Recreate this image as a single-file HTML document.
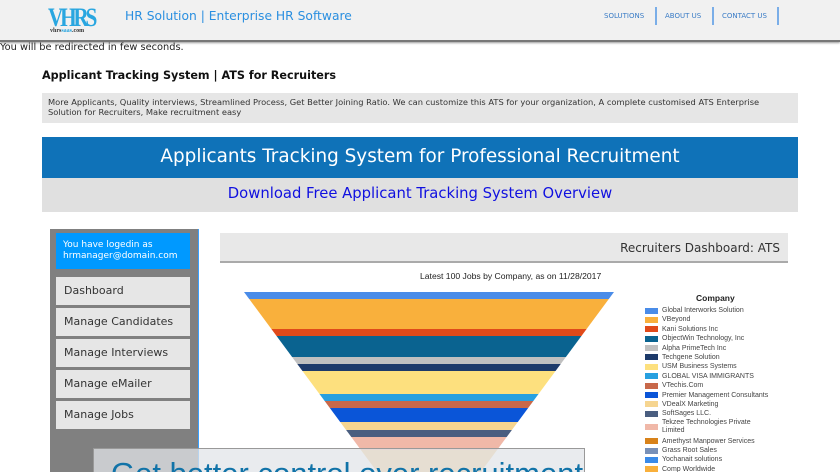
<!DOCTYPE html>
<html><head><meta charset="utf-8"><style>
*{margin:0;padding:0;box-sizing:border-box}
html,body{width:840px;height:472px;overflow:hidden}
body{background:#fff;font-family:"DejaVu Sans","Liberation Sans",sans-serif;position:relative}
.a{position:absolute}
#hdr{left:0;top:0;width:840px;height:42px;background:#f1f1f1;border-bottom:2px solid #777;box-shadow:0 1px 2px #999}
.nav{font-size:7px;color:#3a7cc6;top:12px}
.sep{width:2px;height:18px;background:#7aaee8;top:7px}
.menu{left:56px;width:134px;height:28px;background:#e6e6e6;font-size:11px;color:#333;padding:7px 0 0 8px}
.leg{left:645px;font-family:"Liberation Sans",sans-serif;font-size:7px;color:#444;line-height:9.4px}
.leg div{position:relative;padding-left:17px;height:9.4px;white-space:nowrap}
.leg span{position:absolute;left:0;top:1.5px;width:13px;height:6px}
</style></head><body>
<div id="hdr" class="a"></div>
<div class="a" style="left:48px;top:5px;font-family:'Liberation Serif',serif;font-weight:bold;font-size:26px;color:#29a6e0;letter-spacing:-4px;line-height:26px;transform:scaleX(0.82);transform-origin:left">VHRS</div>
<div class="a" style="left:50px;top:28px;font-family:'Liberation Serif',serif;font-weight:bold;font-size:6px;color:#333">vhrs<span style="color:#29a6e0">saas</span>.com</div>
<div class="a" style="left:125px;top:9px;font-size:12.3px;color:#2a8fe0">HR Solution | Enterprise HR Software</div>
<div class="a nav" style="left:604px">SOLUTIONS</div>
<div class="a sep" style="left:655px"></div>
<div class="a nav" style="left:665px">ABOUT US</div>
<div class="a sep" style="left:712px"></div>
<div class="a nav" style="left:722px">CONTACT US</div>
<div class="a sep" style="left:777px"></div>
<div class="a" style="left:0;top:42px;font-size:9.8px;color:#222">You will be redirected in few seconds.</div>
<div class="a" style="left:42px;top:69px;font-size:11.2px;font-weight:bold;color:#111">Applicant Tracking System | ATS for Recruiters</div>
<div class="a" style="left:42px;top:93px;width:756px;height:30px;background:#e6e6e6;font-size:8.3px;color:#333;padding:4px 6px;line-height:10px">More Applicants, Quality interviews, Streamlined Process, Get Better Joining Ratio. We can customize this ATS for your organization, A complete customised ATS Enterprise Solution for Recruiters, Make recruitment easy</div>
<div class="a" style="left:42px;top:137px;width:756px;height:41px;background:#0f72b8;color:#fff;font-size:18.4px;text-align:center;line-height:40px">Applicants Tracking System for Professional Recruitment</div>
<div class="a" style="left:42px;top:178px;width:756px;height:34px;background:#e0e0e0;color:#1010e0;font-size:14.8px;text-align:center;line-height:32px">Download Free Applicant Tracking System Overview</div>
<div class="a" style="left:50px;top:229px;width:148px;height:243px;background:#808080"></div>
<div class="a" style="left:198px;top:229px;width:1px;height:243px;background:#3aa0ff"></div>
<div class="a" style="left:56px;top:233px;width:134px;height:36px;background:#0099ff;color:#fff;font-size:9px;padding:7px 0 0 7px;line-height:11px">You have logedin as<br>hrmanager@domain.com</div>
<div class="a menu" style="top:277px">Dashboard</div>
<div class="a menu" style="top:308px">Manage Candidates</div>
<div class="a menu" style="top:339px">Manage Interviews</div>
<div class="a menu" style="top:370px">Manage eMailer</div>
<div class="a menu" style="top:401px">Manage Jobs</div>
<div class="a" style="left:220px;top:233px;width:568px;height:30px;background:#e8e8e8;border-bottom:2px solid #aaa;text-align:right;font-size:12px;color:#333;padding:8px 8px 0 0">Recruiters Dashboard: ATS</div>
<div class="a" style="left:420px;top:271px;font-family:'Liberation Sans',sans-serif;font-size:8.6px;color:#222">Latest 100 Jobs by Company, as on 11/28/2017</div>
<div class="a" style="left:244px;top:292px;width:370px;height:180px;clip-path:polygon(0 0,100% 0,50% 250px);background:linear-gradient(#4a8ce8 0 7px,#f9b03c 7px 37px,#e04a1a 37px 44px,#0a6390 44px 65px,#c0c0c0 65px 72px,#1d3a6a 72px 79px,#fde07e 79px 102px,#27a0e0 102px 109px,#c8684a 109px 116px,#0a55d8 116px 130px,#f6d590 130px 138px,#4a5e80 138px 145px,#f0b8a8 145px 158px,#f2cc90 158px)"></div>
<div class="a" style="left:696px;top:293px;font-family:'Liberation Sans',sans-serif;font-size:8.5px;font-weight:bold;color:#222">Company</div>
<div class="a leg" style="top:306px">
<div><span style="background:#4a8ce8"></span>Global Interworks Solution</div>
<div><span style="background:#f9b03c"></span>VBeyond</div>
<div><span style="background:#e04a1a"></span>Kani Solutions Inc</div>
<div><span style="background:#0a6390"></span>ObjectWin Technology, Inc</div>
<div><span style="background:#c0c0c0"></span>Alpha PrimeTech Inc</div>
<div><span style="background:#1d3a6a"></span>Techgene Solution</div>
<div><span style="background:#fde07e"></span>USM Business Systems</div>
<div><span style="background:#27a0e0"></span>GLOBAL VISA IMMIGRANTS</div>
<div><span style="background:#c8684a"></span>VTechis.Com</div>
<div><span style="background:#0a55d8"></span>Premier Management Consultants</div>
<div><span style="background:#f6d590"></span>VDealX Marketing</div>
<div><span style="background:#4a5e80"></span>SoftSages LLC.</div>
<div style="height:18px;line-height:8.5px"><span style="background:#f0b8a8;top:5px"></span>Tekzee Technologies Private<br>Limited</div>
<div><span style="background:#d8821a"></span>Amethyst Manpower Services</div>
<div><span style="background:#7890b8"></span>Grass Root Sales</div>
<div><span style="background:#3a8ae8"></span>Yochanait solutions</div>
<div><span style="background:#f9b03c"></span>Comp Worldwide</div>
</div>
<div class="a" style="left:93px;top:448px;width:492px;height:24px;background:rgba(225,228,232,0.75);border:1px solid #999;border-bottom:none;overflow:hidden">
<div style="position:absolute;left:17px;top:8px;font-family:'Liberation Sans',sans-serif;font-size:31px;color:#1173a8;white-space:nowrap;line-height:34px">Get better control over recruitment</div></div>
</body></html>
